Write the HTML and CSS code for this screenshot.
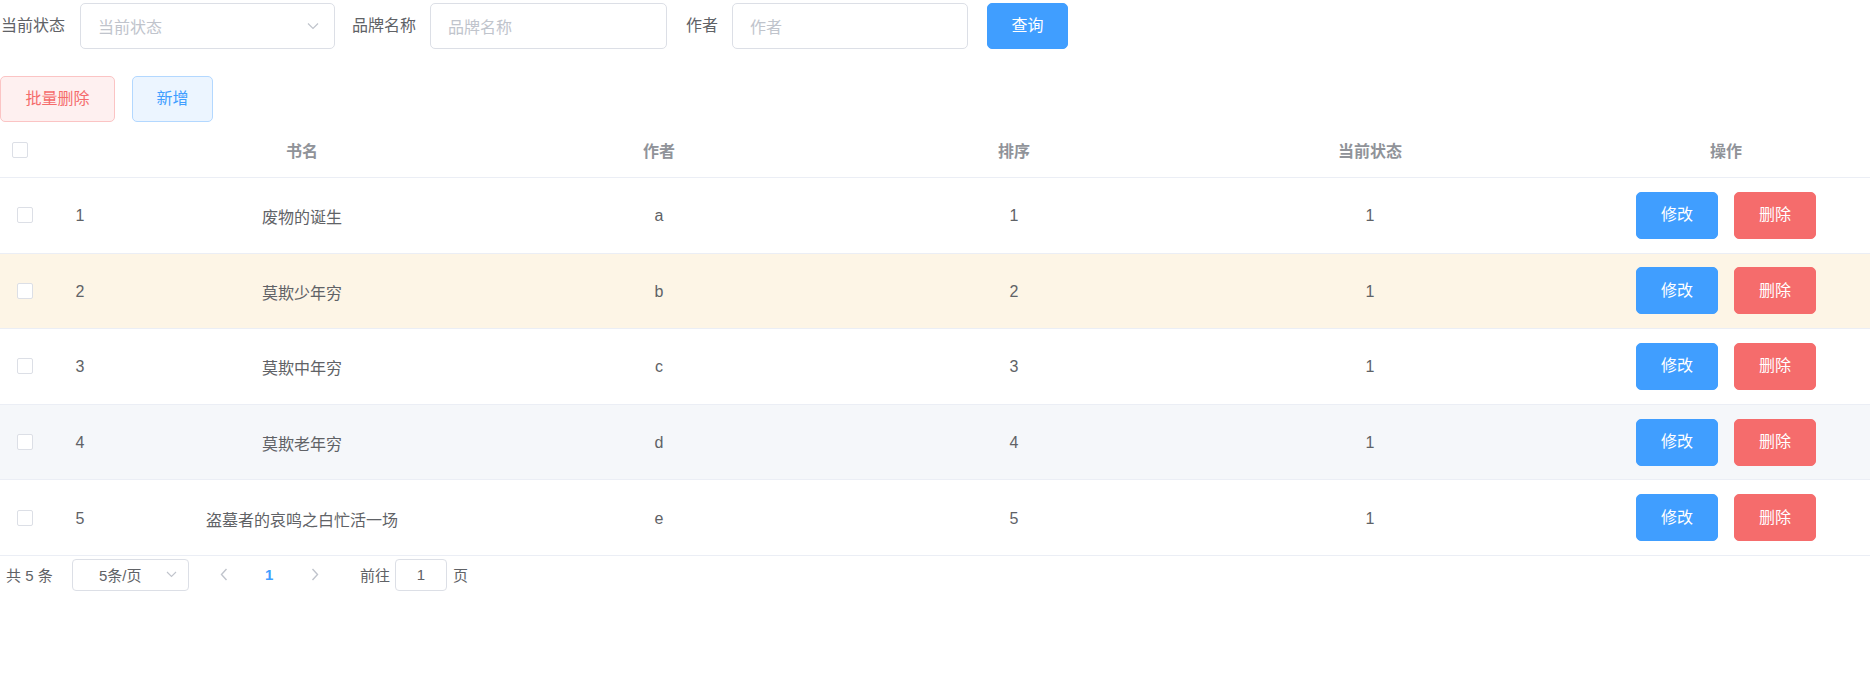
FILE: index.html
```html
<!DOCTYPE html>
<html lang="zh">
<head>
<meta charset="utf-8">
<title>书籍管理</title>
<link rel="stylesheet" href="styles.css">
</head>
<body>
<div class="page">
  <div class="search">
    <div class="item">
      <span class="label">当前状态</span>
      <div class="field select-field w-select">
        <span class="ph">当前状态</span>
        <svg class="chev" width="12" height="8" viewBox="0 0 12 8"><path d="M1 1.5 L6 6.5 L11 1.5" fill="none" stroke="#c0c4cc" stroke-width="1.2"/></svg>
      </div>
    </div>
    <div class="item item-brand">
      <span class="label">品牌名称</span>
      <div class="field w-brand"><span class="ph">品牌名称</span></div>
    </div>
    <div class="item">
      <span class="label">作者</span>
      <div class="field w-author"><span class="ph">作者</span></div>
    </div>
    <button class="btn primary query">查询</button>
  </div>

  <div class="toolbar">
    <button class="btn plain-danger batch">批量删除</button>
    <button class="btn plain-primary add">新增</button>
  </div>

  <div class="table">
    <div class="row head">
      <div class="cell c-check head-check"><span class="checkbox"></span></div>
      <div class="cell"></div>
      <div class="cell">书名</div>
      <div class="cell">作者</div>
      <div class="cell">排序</div>
      <div class="cell">当前状态</div>
      <div class="cell c-ops-head">操作</div>
    </div>

    <div class="row body-row">
      <div class="cell c-check"><span class="checkbox"></span></div>
      <div class="cell">1</div>
      <div class="cell">废物的诞生</div>
      <div class="cell">a</div>
      <div class="cell">1</div>
      <div class="cell">1</div>
      <div class="cell c-ops"><button class="btn primary op">修改</button><button class="btn danger op">删除</button></div>
    </div>
    <div class="row body-row warn">
      <div class="cell c-check"><span class="checkbox"></span></div>
      <div class="cell">2</div>
      <div class="cell">莫欺少年穷</div>
      <div class="cell">b</div>
      <div class="cell">2</div>
      <div class="cell">1</div>
      <div class="cell c-ops"><button class="btn primary op">修改</button><button class="btn danger op">删除</button></div>
    </div>
    <div class="row body-row">
      <div class="cell c-check"><span class="checkbox"></span></div>
      <div class="cell">3</div>
      <div class="cell">莫欺中年穷</div>
      <div class="cell">c</div>
      <div class="cell">3</div>
      <div class="cell">1</div>
      <div class="cell c-ops"><button class="btn primary op">修改</button><button class="btn danger op">删除</button></div>
    </div>
    <div class="row body-row hover">
      <div class="cell c-check"><span class="checkbox"></span></div>
      <div class="cell">4</div>
      <div class="cell">莫欺老年穷</div>
      <div class="cell">d</div>
      <div class="cell">4</div>
      <div class="cell">1</div>
      <div class="cell c-ops"><button class="btn primary op">修改</button><button class="btn danger op">删除</button></div>
    </div>
    <div class="row body-row">
      <div class="cell c-check"><span class="checkbox"></span></div>
      <div class="cell">5</div>
      <div class="cell">盗墓者的哀鸣之白忙活一场</div>
      <div class="cell">e</div>
      <div class="cell">5</div>
      <div class="cell">1</div>
      <div class="cell c-ops"><button class="btn primary op">修改</button><button class="btn danger op">删除</button></div>
    </div>
  </div>

  <div class="pager">
    <span class="total">共 5 条</span>
    <div class="size-select">
      <span>5条/页</span>
      <svg class="chev-s" width="11" height="7" viewBox="0 0 11 7"><path d="M1 1 L5.5 5.5 L10 1" fill="none" stroke="#c0c4cc" stroke-width="1.1"/></svg>
    </div>
    <svg class="arrow prev" width="8" height="13" viewBox="0 0 8 13"><path d="M6.5 1 L1.5 6.5 L6.5 12" fill="none" stroke="#c0c4cc" stroke-width="1.4"/></svg>
    <span class="pnum">1</span>
    <svg class="arrow next" width="8" height="13" viewBox="0 0 8 13"><path d="M1.5 1 L6.5 6.5 L1.5 12" fill="none" stroke="#c0c4cc" stroke-width="1.4"/></svg>
    <span class="goto">前往</span>
    <div class="goto-input">1</div>
    <span class="page-unit">页</span>
  </div>
</div>
</body>
</html>
```

FILE: styles.css
```css
* { box-sizing: border-box; }
html, body { margin: 0; padding: 0; background: #fff; }
body {
  font-family: "Liberation Sans", "Noto Sans CJK SC", sans-serif;
  font-size: 16px;
  color: #606266;
}
.page { width: 1870px; }

/* search form */
.search {
  display: flex;
  align-items: center;
  padding-top: 3px;
  height: 49px;
}
.item { display: flex; align-items: center; margin-right: 16px; }
.item-brand { margin-right: 18px; }
.label { padding-right: 14px; line-height: 46px; color: #606266; padding-left: 1px; }
.item:first-child .label { padding-right: 15px; }
.field {
  height: 46px;
  border: 1px solid #dcdfe6;
  border-radius: 5px;
  display: flex;
  align-items: center;
  padding: 0 17px;
  background: #fff;
}
.ph { color: #c0c4cc; }
.w-select { width: 255px; justify-content: space-between; padding-right: 15px; }
.w-brand { width: 237px; }
.w-author { width: 236px; }
.chev { display: block; }

/* buttons */
.btn {
  font-family: inherit;
  font-size: 16px;
  height: 46px;
  border-radius: 5px;
  border: 1px solid transparent;
  padding: 0;
  cursor: pointer;
  line-height: 1;
}
.primary { background: #409eff; border-color: #409eff; color: #fff; }
.danger { background: #f56c6c; border-color: #f56c6c; color: #fff; }
.plain-danger { background: #fef0f0; border-color: #fbc4c4; color: #f56c6c; }
.plain-primary { background: #ecf5ff; border-color: #b3d8ff; color: #409eff; }
.query { width: 81px; margin-left: 3px; }

.toolbar {
  display: flex;
  gap: 17px;
  margin-top: 27px;
}
.batch { width: 115px; }
.add { width: 81px; }

/* table */
.table { width: 1870px; }
.row {
  display: grid;
  grid-template-columns: 50px 60px 384px 330px 380px 332px 1fr;
  height: 75.6px;
  border-bottom: 1px solid #ebeef5;
  background: #fff;
}
.row.head { height: 56px; color: #909399; font-weight: bold; }
.row.warn { background: #fdf5e6; }
.row.hover { background: #f5f7fa; }
.cell {
  display: flex;
  align-items: center;
  justify-content: center;
  white-space: nowrap;
}
.body-row .cell { padding-top: 2px; }
.body-row .c-ops { padding-top: 0; }
.body-row .c-check { padding-top: 0; }
.c-check { justify-content: flex-start; padding-left: 17px; }
.head-check { padding-left: 12px; }
.checkbox {
  width: 16px;
  height: 16px;
  border: 1px solid #dcdfe6;
  border-radius: 2px;
  background: #fff;
  display: block;
}
.c-ops-head { padding-left: 46px; }
.c-ops { justify-content: flex-start; padding-left: 100px; gap: 16px; }
.op { width: 82px; height: 47px; }

/* pager */
.pager {
  display: flex;
  align-items: center;
  height: 35px;
  padding-top: 3px;
  font-size: 15px;
  color: #606266;
}
.total { margin-left: 6px; width: 66px; }
.size-select {
  width: 117px;
  height: 32px;
  border: 1px solid #dcdfe6;
  border-radius: 4px;
  display: flex;
  align-items: center;
  justify-content: space-between;
  padding: 0 11px 0 26px;
}
.chev-s { display: block; }
.arrow { display: block; }
.prev { margin-left: 31px; }
.pnum { color: #409eff; font-weight: bold; margin-left: 37px; width: 9px; }
.next { margin-left: 37px; }
.goto { margin-left: 41px; }
.goto-input {
  margin-left: 5px;
  width: 52px;
  height: 32px;
  border: 1px solid #dcdfe6;
  border-radius: 4px;
  display: flex;
  align-items: center;
  justify-content: center;
}
.page-unit { margin-left: 6px; }
```
